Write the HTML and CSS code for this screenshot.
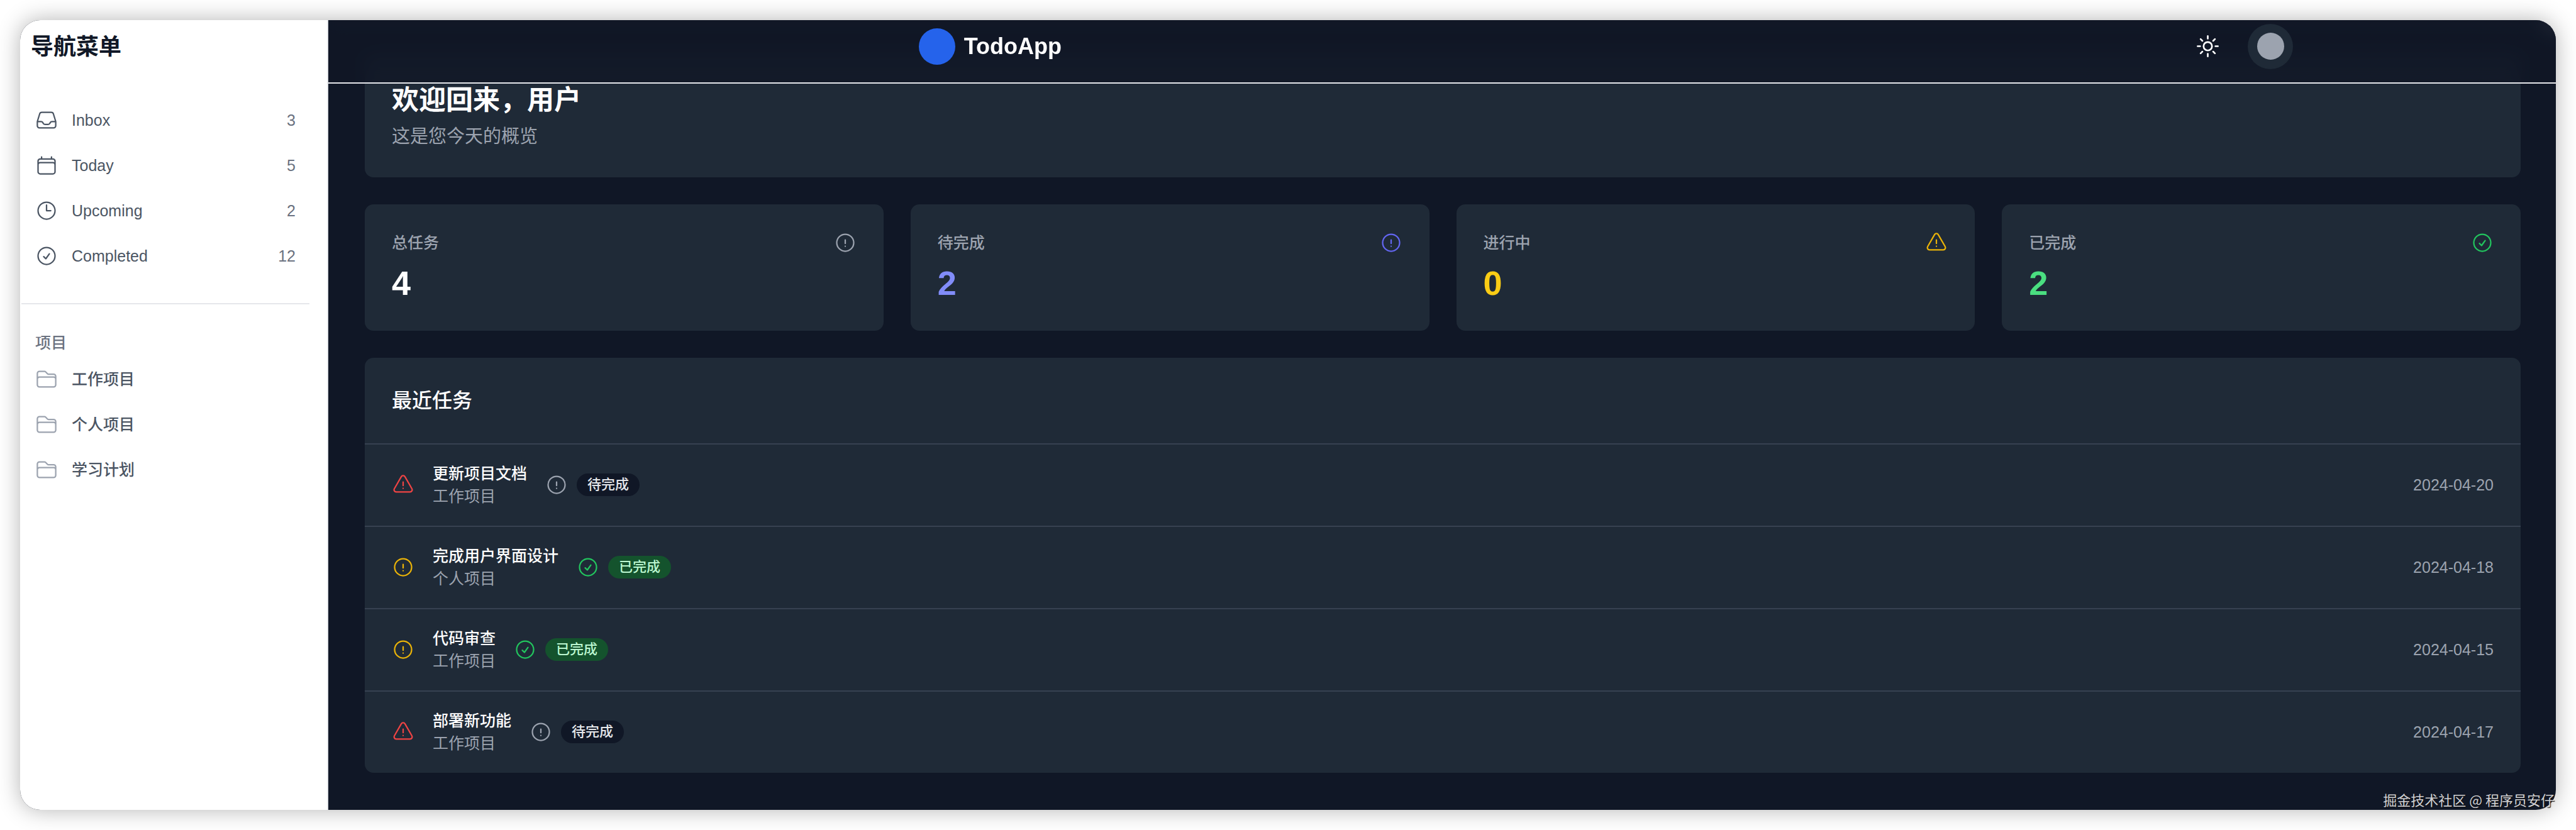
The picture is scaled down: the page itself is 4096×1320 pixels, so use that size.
FILE: index.html
```html
<!DOCTYPE html>
<html lang="zh-CN">
<head>
<meta charset="utf-8">
<meta name="viewport" content="width=device-width, initial-scale=1">
<title>TodoApp</title>
<link rel="stylesheet" href="styles.css">
</head>
<body>
<svg class="sprite" aria-hidden="true">
  <symbol id="inbox" viewBox="0 0 24 24"><path d="M2.25 13.5h3.86a2.25 2.25 0 0 1 2.012 1.244l.256.512a2.25 2.25 0 0 0 2.013 1.244h3.218a2.25 2.25 0 0 0 2.013-1.244l.256-.512a2.25 2.25 0 0 1 2.013-1.244h3.859m-19.5.338V18a2.25 2.25 0 0 0 2.25 2.25h15A2.25 2.25 0 0 0 21.75 18v-4.162c0-.224-.034-.447-.1-.661L19.24 5.338a2.25 2.25 0 0 0-2.15-1.588H6.911a2.25 2.25 0 0 0-2.15 1.588L2.35 13.177a2.25 2.25 0 0 0-.1.661Z"/></symbol>
  <symbol id="calendar" viewBox="0 0 24 24"><path d="M6.75 3v2.25M17.25 3v2.25M3 18.75V7.5a2.25 2.25 0 0 1 2.25-2.25h13.5A2.25 2.25 0 0 1 21 7.5v11.25m-18 0A2.25 2.25 0 0 0 5.25 21h13.5A2.25 2.25 0 0 0 21 18.75m-18 0v-7.5A2.25 2.25 0 0 1 5.25 9h13.5A2.25 2.25 0 0 1 21 11.25v7.5"/></symbol>
  <symbol id="clock" viewBox="0 0 24 24"><path d="M12 6v6h4.5m4.5 0a9 9 0 1 1-18 0 9 9 0 0 1 18 0Z"/></symbol>
  <symbol id="check" viewBox="0 0 24 24"><path d="M9 12.75 11.25 15 15 9.75M21 12a9 9 0 1 1-18 0 9 9 0 0 1 18 0Z"/></symbol>
  <symbol id="alert" viewBox="0 0 24 24"><path d="M12 9v3.75m9-.75a9 9 0 1 1-18 0 9 9 0 0 1 18 0Zm-9 3.75h.008v.008H12v-.008Z"/></symbol>
  <symbol id="warning" viewBox="0 0 24 24"><path d="M12 9v3.75m-9.303 3.376c-.866 1.5.217 3.374 1.948 3.374h14.71c1.73 0 2.813-1.874 1.948-3.374L13.949 3.378c-.866-1.5-3.032-1.5-3.898 0L2.697 16.126ZM12 15.75h.007v.008H12v-.008Z"/></symbol>
  <symbol id="folder" viewBox="0 0 24 24"><path d="M2.25 12.75V12A2.25 2.25 0 0 1 4.5 9.75h15A2.25 2.25 0 0 1 21.75 12v.75m-8.69-6.44-2.12-2.12a1.5 1.5 0 0 0-1.061-.44H4.5A2.25 2.25 0 0 0 2.25 6v12a2.25 2.25 0 0 0 2.25 2.25h15A2.25 2.25 0 0 0 21.75 18V9a2.25 2.25 0 0 0-2.25-2.25h-5.379a1.5 1.5 0 0 1-1.06-.44Z"/></symbol>
  <symbol id="sun" viewBox="0 0 24 24"><path d="M12 3v2.25m6.364.386-1.591 1.591M21 12h-2.25m-.386 6.364-1.591-1.591M12 18.75V21m-4.773-4.227-1.591 1.591M5.25 12H3m4.227-4.773L5.636 5.636M15.75 12a3.75 3.75 0 1 1-7.5 0 3.75 3.75 0 0 1 7.5 0Z"/></symbol>
</svg>

<div class="window">
  <aside class="sidebar">
    <h2 class="sidebar-title">导航菜单</h2>
    <nav class="nav">
      <a class="nav-item" href="#inbox"><svg class="icon"><use href="#inbox"/></svg><span class="nav-label">Inbox</span><span class="nav-count">3</span></a>
      <a class="nav-item" href="#today"><svg class="icon"><use href="#calendar"/></svg><span class="nav-label">Today</span><span class="nav-count">5</span></a>
      <a class="nav-item" href="#upcoming"><svg class="icon"><use href="#clock"/></svg><span class="nav-label">Upcoming</span><span class="nav-count">2</span></a>
      <a class="nav-item" href="#completed"><svg class="icon"><use href="#check"/></svg><span class="nav-label">Completed</span><span class="nav-count">12</span></a>
    </nav>
    <nav class="nav projects">
      <h3 class="projects-title">项目</h3>
      <a class="nav-item" href="#work"><svg class="icon muted"><use href="#folder"/></svg><span class="nav-label">工作项目</span></a>
      <a class="nav-item" href="#personal"><svg class="icon muted"><use href="#folder"/></svg><span class="nav-label">个人项目</span></a>
      <a class="nav-item" href="#study"><svg class="icon muted"><use href="#folder"/></svg><span class="nav-label">学习计划</span></a>
    </nav>
  </aside>

  <div class="main">
    <header class="topbar">
      <a class="brand" href="#home"><span class="brand-mark"></span>TodoApp</a>
      <div class="actions">
        <button class="round-button" type="button" aria-label="切换主题"><svg class="icon icon-large"><use href="#sun"/></svg></button>
        <button class="round-button avatar" type="button" aria-label="用户菜单"><span class="avatar-dot"></span></button>
      </div>
    </header>

    <main class="content">
      <section class="card welcome">
        <h1 class="welcome-title">欢迎回来，用户</h1>
        <p class="welcome-text">这是您今天的概览</p>
      </section>

      <section class="stats">
        <div class="card stat"><div class="stat-head"><span>总任务</span><svg class="icon muted"><use href="#alert"/></svg></div><p class="stat-value">4</p></div>
        <div class="card stat"><div class="stat-head"><span>待完成</span><svg class="icon indigo"><use href="#alert"/></svg></div><p class="stat-value value-indigo">2</p></div>
        <div class="card stat"><div class="stat-head"><span>进行中</span><svg class="icon yellow"><use href="#warning"/></svg></div><p class="stat-value value-yellow">0</p></div>
        <div class="card stat"><div class="stat-head"><span>已完成</span><svg class="icon green"><use href="#check"/></svg></div><p class="stat-value value-green">2</p></div>
      </section>

      <section class="card">
        <h2 class="tasks-title">最近任务</h2>
        <ul class="tasks">
          <li class="task">
            <svg class="icon red"><use href="#warning"/></svg>
            <div><p class="task-name">更新项目文档</p><p class="task-project">工作项目</p></div>
            <div class="task-status"><svg class="icon muted"><use href="#alert"/></svg><span class="badge">待完成</span></div>
            <time class="task-date" datetime="2024-04-20">2024-04-20</time>
          </li>
          <li class="task">
            <svg class="icon yellow"><use href="#alert"/></svg>
            <div><p class="task-name">完成用户界面设计</p><p class="task-project">个人项目</p></div>
            <div class="task-status"><svg class="icon green"><use href="#check"/></svg><span class="badge badge-done">已完成</span></div>
            <time class="task-date" datetime="2024-04-18">2024-04-18</time>
          </li>
          <li class="task">
            <svg class="icon yellow"><use href="#alert"/></svg>
            <div><p class="task-name">代码审查</p><p class="task-project">工作项目</p></div>
            <div class="task-status"><svg class="icon green"><use href="#check"/></svg><span class="badge badge-done">已完成</span></div>
            <time class="task-date" datetime="2024-04-15">2024-04-15</time>
          </li>
          <li class="task">
            <svg class="icon red"><use href="#warning"/></svg>
            <div><p class="task-name">部署新功能</p><p class="task-project">工作项目</p></div>
            <div class="task-status"><svg class="icon muted"><use href="#alert"/></svg><span class="badge">待完成</span></div>
            <time class="task-date" datetime="2024-04-17">2024-04-17</time>
          </li>
        </ul>
      </section>
    </main>
  </div>
</div>
<p class="watermark">掘金技术社区 @ 程序员安仔</p>
</body>
</html>
```
FILE: styles.css
```css
*, *::before, *::after { box-sizing: border-box; }

body, h1, h2, h3, p, ul { margin: 0; padding: 0; }

body {
  position: relative;
  min-height: 100vh;
  padding: 32px;
  background: #fff;
  color: #fff;
  font-family: "Liberation Sans", "Noto Sans CJK SC", sans-serif;
  font-size: 25px;
  line-height: 36px;
}

a { color: inherit; text-decoration: none; }

.sprite { display: none; }

.icon {
  flex: none;
  display: block;
  width: 36px;
  height: 36px;
  fill: none;
  stroke: currentColor;
  stroke-width: 1.5;
  stroke-linecap: round;
  stroke-linejoin: round;
}
.icon-large { width: 43px; height: 43px; }
.muted { color: #9ca3af; }
.indigo { color: #6366f1; }
.yellow { color: #eab308; }
.green { color: #22c55e; }
.red { color: #ef4444; }

.window {
  display: flex;
  min-height: calc(100vh - 64px);
  border-radius: 32px;
  overflow: hidden;
  background: #101726;
  box-shadow: 0 0 36px rgba(0, 0, 0, 0.3);
}

/* Sidebar */
.sidebar {
  flex: none;
  width: 490px;
  padding: 18px 28px 18px 2px;
  background: #fff;
  border-right: 2px solid #e5e7eb;
  color: #4b5563;
}
.sidebar-title {
  padding-left: 15px;
  color: #111827;
  font-size: 36px;
  line-height: 50px;
  font-weight: 700;
}
.nav {
  display: flex;
  flex-direction: column;
  gap: 8px;
  padding: 59px 0 43px;
}
.nav-item {
  display: flex;
  align-items: center;
  gap: 22px;
  padding: 14px 22px;
  font-weight: 500;
}
.nav-label { flex: 1; }
.nav-count { color: #6b7280; font-weight: 400; }
.projects {
  padding: 43px 0 0;
  border-top: 2px solid #e5e7eb;
}
.projects-title {
  padding: 0 22px;
  color: #6b7280;
  font-size: 25px;
  font-weight: 500;
}
.projects { gap: 8px; }

/* Header bar */
.main { flex: 1; min-width: 0; }
.topbar {
  position: sticky;
  top: 0;
  z-index: 1;
  display: flex;
  align-items: center;
  justify-content: space-between;
  height: 101px;
  padding: 0 11.8% 16px 26.5%;
  background: rgba(16, 23, 38, 0.8);
  border-bottom: 2px solid #e5e7eb;
  backdrop-filter: blur(14px);
}
.brand {
  display: flex;
  align-items: center;
  gap: 14px;
  font-size: 36px;
  font-weight: 700;
}
.brand-mark {
  width: 58px;
  height: 58px;
  border-radius: 50%;
  background: #2563eb;
}
.actions { display: flex; gap: 28px; }
.round-button {
  display: grid;
  place-items: center;
  width: 72px;
  height: 72px;
  padding: 0;
  border: 0;
  border-radius: 50%;
  background: transparent;
  color: #fff;
}
.avatar { background: #1f2a37; }
.avatar-dot {
  width: 43px;
  height: 43px;
  border-radius: 50%;
  background: #9ca3af;
}

/* Content, scrolled partly under the header bar */
.content {
  display: flex;
  flex-direction: column;
  gap: 43px;
  margin-top: -45px;
  padding: 0 56px 58px 58px;
}
.card { border-radius: 14px; background: #1f2a37; }

.welcome { padding: 43px; }
.welcome-title { font-size: 43px; line-height: 57px; font-weight: 700; }
.welcome-text {
  margin-top: 8px;
  color: #9ca3af;
  font-size: 29px;
  line-height: 43px;
}

.stats { display: grid; grid-template-columns: repeat(4, 1fr); gap: 43px; }
.stat { padding: 43px; }
.stat-head {
  display: flex;
  align-items: center;
  justify-content: space-between;
  color: #9ca3af;
  font-weight: 500;
}
.stat-value {
  margin-top: 14px;
  font-size: 54px;
  line-height: 65px;
  font-weight: 700;
}
.value-indigo { color: #818cf8; }
.value-yellow { color: #facc15; }
.value-green { color: #4ade80; }

.tasks-title {
  padding: 43px;
  border-bottom: 2px solid #374151;
  font-size: 32px;
  line-height: 50px;
  font-weight: 500;
}
.tasks { list-style: none; }
.task {
  display: flex;
  align-items: center;
  gap: 29px;
  padding: 28px 43px 29px;
}
.task + .task { border-top: 2px solid #374151; }
.task-name { font-weight: 500; }
.task-project { color: #9ca3af; }
.task-status { display: flex; align-items: center; gap: 14px; }
.badge {
  padding: 0 17px;
  border-radius: 18px;
  background: #101726;
  color: #e5e7eb;
  font-size: 22px;
  font-weight: 500;
}
.badge-done { background: #14532d; color: #bbf7d0; }
.task-date { margin-left: auto; color: #9ca3af; }

.watermark {
  position: absolute;
  right: 34px;
  bottom: 31px;
  z-index: 2;
  color: #d1d1d4;
  font-family: "Noto Sans CJK SC", sans-serif;
  font-size: 22px;
  text-shadow: 1px 1px 1px #111;
}
```
